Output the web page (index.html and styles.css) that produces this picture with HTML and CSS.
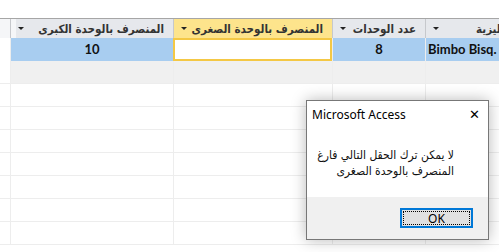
FILE: index.html
```html
<!DOCTYPE html>
<html lang="ar">
<head>
    <meta charset="UTF-8">
    <title>Datasheet</title>
    <link rel="stylesheet" href="styles.css">
</head>
<body>
    <div class="sheet">
        <div class="row header">
            <div class="cell gap"></div>
            <div class="cell"><span class="arrow"></span><span class="label">المنصرف بالوحدة الكبرى</span></div>
            <div class="cell active-head"><span class="arrow"></span><span class="label">المنصرف بالوحدة الصغرى</span></div>
            <div class="cell"><span class="arrow"></span><span class="label">عدد الوحدات</span></div>
            <div class="cell"><span class="arrow"></span><span class="label">الاسم بالانجليزية</span></div>
        </div>
        <div class="row current">
            <div class="cell gap"></div>
            <div class="cell num">10</div>
            <div class="cell editing"></div>
            <div class="cell num">8</div>
            <div class="cell name">Bimbo Bisq.</div>
        </div>
        <div class="row new-rec">
            <div class="cell gap"></div>
            <div class="cell"></div>
            <div class="cell"></div>
            <div class="cell"></div>
            <div class="cell"></div>
        </div>
        <div class="row"><div class="cell gap"></div><div class="cell"></div><div class="cell"></div><div class="cell"></div><div class="cell"></div></div>
        <div class="row"><div class="cell gap"></div><div class="cell"></div><div class="cell"></div><div class="cell"></div><div class="cell"></div></div>
        <div class="row"><div class="cell gap"></div><div class="cell"></div><div class="cell"></div><div class="cell"></div><div class="cell"></div></div>
        <div class="row"><div class="cell gap"></div><div class="cell"></div><div class="cell"></div><div class="cell"></div><div class="cell"></div></div>
        <div class="row"><div class="cell gap"></div><div class="cell"></div><div class="cell"></div><div class="cell"></div><div class="cell"></div></div>
        <div class="row"><div class="cell gap"></div><div class="cell"></div><div class="cell"></div><div class="cell"></div><div class="cell"></div></div>
        <div class="row"><div class="cell gap"></div><div class="cell"></div><div class="cell"></div><div class="cell"></div><div class="cell"></div></div>
    </div>

    <div class="dialog">
        <div class="dlg-title">
            <span>Microsoft Access</span>
            <span class="close">&#x2715;</span>
        </div>
        <div class="dlg-body">
            <p>لا يمكن ترك الحقل التالي فارغ<br>المنصرف بالوحدة الصغرى</p>
        </div>
        <div class="dlg-foot">
            <button class="ok-btn"><span>OK</span></button>
        </div>
    </div>
</body>
</html>
```

FILE: styles.css
```css
body {
    margin: 0;
    background-color: #fff;
    font-family: "Liberation Sans", "DejaVu Sans", sans-serif;
    overflow: hidden;
    width: 499px;
    height: 252px;
}
.sheet {
    margin-top: 18px;
    width: 580px;
    border-top: 1px solid #a6a6a6;
}
.row {
    display: grid;
    grid-template-columns: 10px 163px 159px 93px 145px;
    height: 23px;
}
.cell {
    box-sizing: border-box;
    border-left: 1px solid #ededed;
    border-bottom: 1px solid #ededed;
    overflow: hidden;
    white-space: nowrap;
}
.cell.gap {
    border-left: none;
}
.header {
    height: 19px;
    background-color: #e6e8ec;
}
.header .cell {
    display: flex;
    align-items: center;
    justify-content: space-between;
    padding: 0 9px 0 7px;
    border-left: 1px solid #c6c8cc;
    border-bottom: none;
    font-family: "DejaVu Sans Condensed", "DejaVu Sans", sans-serif;
    font-size: 11.5px;
    font-weight: bold;
    color: #333;
}
.header .cell.gap {
    background-color: #f5f6f8;
    border-left: none;
}
.header .active-head {
    background-color: #fde48c;
}
.label {
    direction: rtl;
}
.arrow {
    width: 0;
    height: 0;
    border-left: 3px solid transparent;
    border-right: 3px solid transparent;
    border-top: 3px solid #222;
    flex-shrink: 0;
}
.current .cell {
    background-color: #a8cdf0;
    border-bottom: none;
    font-family: Lato, "Liberation Sans", sans-serif;
    font-size: 13px;
    font-weight: bold;
    color: #111;
    line-height: 23px;
}
.current .cell.gap {
    background-color: #fff;
}
.current .num {
    text-align: center;
}
.current .name {
    padding-left: 2px;
}
.current .editing {
    background-color: #fff;
    border: 2px solid #f4c845;
}
.new-rec .cell {
    background-color: #f0f0f0;
}
.new-rec .cell.gap {
    background-color: #fff;
}

.dialog {
    position: absolute;
    left: 306px;
    top: 100px;
    width: 183px;
    height: 140px;
    box-sizing: border-box;
    background-color: #fff;
    border: 1px solid #777;
    box-shadow: 0 0 14px rgba(0, 0, 0, 0.28);
    display: flex;
    flex-direction: column;
    font-family: "Noto Sans", sans-serif;
}
.dlg-title {
    display: flex;
    justify-content: space-between;
    align-items: center;
    height: 26px;
    padding: 0 8px 0 5px;
    font-size: 12px;
    color: #000;
}
.close {
    font-size: 13px;
    font-family: "DejaVu Sans", sans-serif;
    font-weight: 300;
}
.dlg-body {
    flex: 1;
    padding: 0 34px 0 8px;
}
.dlg-body p {
    direction: rtl;
    text-align: right;
    margin: 20px 0 0 0;
    font-family: "DejaVu Sans Condensed", "DejaVu Sans", sans-serif;
    font-size: 12px;
    line-height: 16px;
    color: #111;
    white-space: nowrap;
}
.dlg-foot {
    height: 42px;
    background-color: #f0f0f0;
    display: flex;
    justify-content: flex-end;
    align-items: flex-start;
    padding: 11px 15px 0 0;
    box-sizing: border-box;
}
.ok-btn {
    width: 73px;
    height: 20px;
    padding: 1px;
    border: 2px solid #0078d7;
    background-color: #e1e1e1;
    font-family: "Noto Sans", sans-serif;
    font-size: 12px;
    color: #000;
    box-sizing: border-box;
}
.ok-btn span {
    display: flex;
    align-items: center;
    justify-content: center;
    height: 100%;
    border: 1px dotted #000;
    box-sizing: border-box;
}
```
